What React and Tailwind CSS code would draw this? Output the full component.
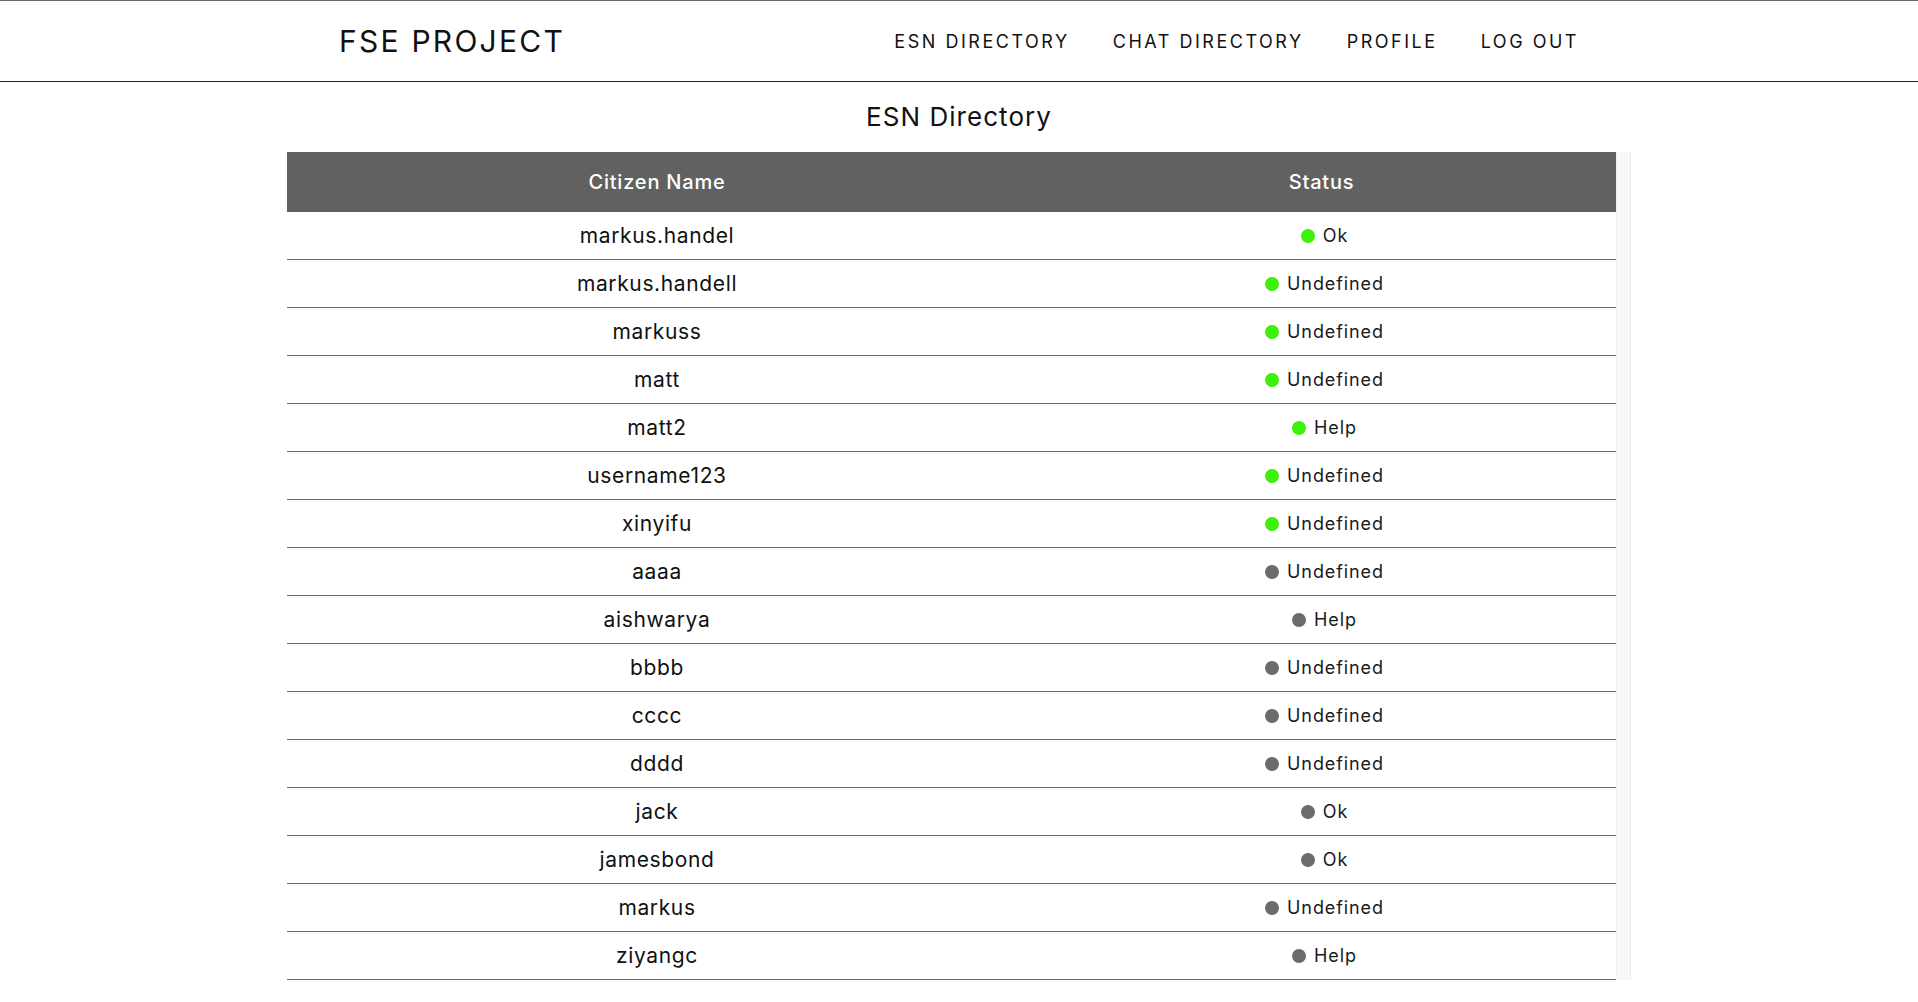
import React from "react";

const navItems = ["ESN DIRECTORY", "CHAT DIRECTORY", "PROFILE", "LOG OUT"];

const citizens = [
    { name: "markus.handel", status: "Ok", online: true },
    { name: "markus.handell", status: "Undefined", online: true },
    { name: "markuss", status: "Undefined", online: true },
    { name: "matt", status: "Undefined", online: true },
    { name: "matt2", status: "Help", online: true },
    { name: "username123", status: "Undefined", online: true },
    { name: "xinyifu", status: "Undefined", online: true },
    { name: "aaaa", status: "Undefined", online: false },
    { name: "aishwarya", status: "Help", online: false },
    { name: "bbbb", status: "Undefined", online: false },
    { name: "cccc", status: "Undefined", online: false },
    { name: "dddd", status: "Undefined", online: false },
    { name: "jack", status: "Ok", online: false },
    { name: "jamesbond", status: "Ok", online: false },
    { name: "markus", status: "Undefined", online: false },
    { name: "ziyangc", status: "Help", online: false },
];

const CitizenRow = ({ citizen }) => (
    <div className="flex h-[48px] items-center border-b border-[#6a6a6a]">
        <div className="w-[740px] text-center text-[21px] tracking-[0.03em] text-[#111]">{citizen.name}</div>
        <div className="flex-1 flex items-center justify-center gap-[8px] pl-[6px]">
            <span className={`w-[14px] h-[14px] rounded-full ${citizen.online ? "bg-[#3cf20a]" : "bg-[#6b6b6b]"}`} />
            <span className="text-[18px] tracking-[0.05em] text-[#1a1a1a]">{citizen.status}</span>
        </div>
    </div>
);

export default function App() {
    return (
        <div className="min-h-[1002px] bg-white" style={{ fontFamily: "Inter, 'Noto Sans', sans-serif" }}>
            <header className="h-[82px] border-t border-b border-t-[#666] border-b-[#222] box-border">
                <div className="w-[1240px] mx-auto h-full flex items-center justify-between">
                    <div className="text-[30px] tracking-[0.075em] text-[#111]">FSE PROJECT</div>
                    <nav className="flex items-center gap-[43px]">
                        {navItems.map((item) => (
                            <a key={item} className="text-[18px] tracking-[0.14em] text-[#111] cursor-pointer">
                                {item}
                            </a>
                        ))}
                    </nav>
                </div>
            </header>

            <main className="w-[1344px] mx-auto">
                <h1 className="mt-[19px] mb-[19px] h-[32px] leading-[32px] text-center text-[26px] tracking-[0.04em] text-[#111]">
                    ESN Directory
                </h1>
                <div className="flex">
                    <div className="flex-1">
                        <div className="flex h-[60px] items-center bg-[#616161] text-white text-[20px] tracking-[0.04em] font-medium">
                            <div className="w-[740px] text-center">Citizen Name</div>
                            <div className="flex-1 text-center">Status</div>
                        </div>
                        {citizens.map((c) => (
                            <CitizenRow key={c.name} citizen={c} />
                        ))}
                    </div>
                    <div className="w-[15px] bg-[#f8f8f8] border-l border-r border-l-[#f0f0f0] border-r-[#ececec]" />
                </div>
            </main>
        </div>
    );
}
